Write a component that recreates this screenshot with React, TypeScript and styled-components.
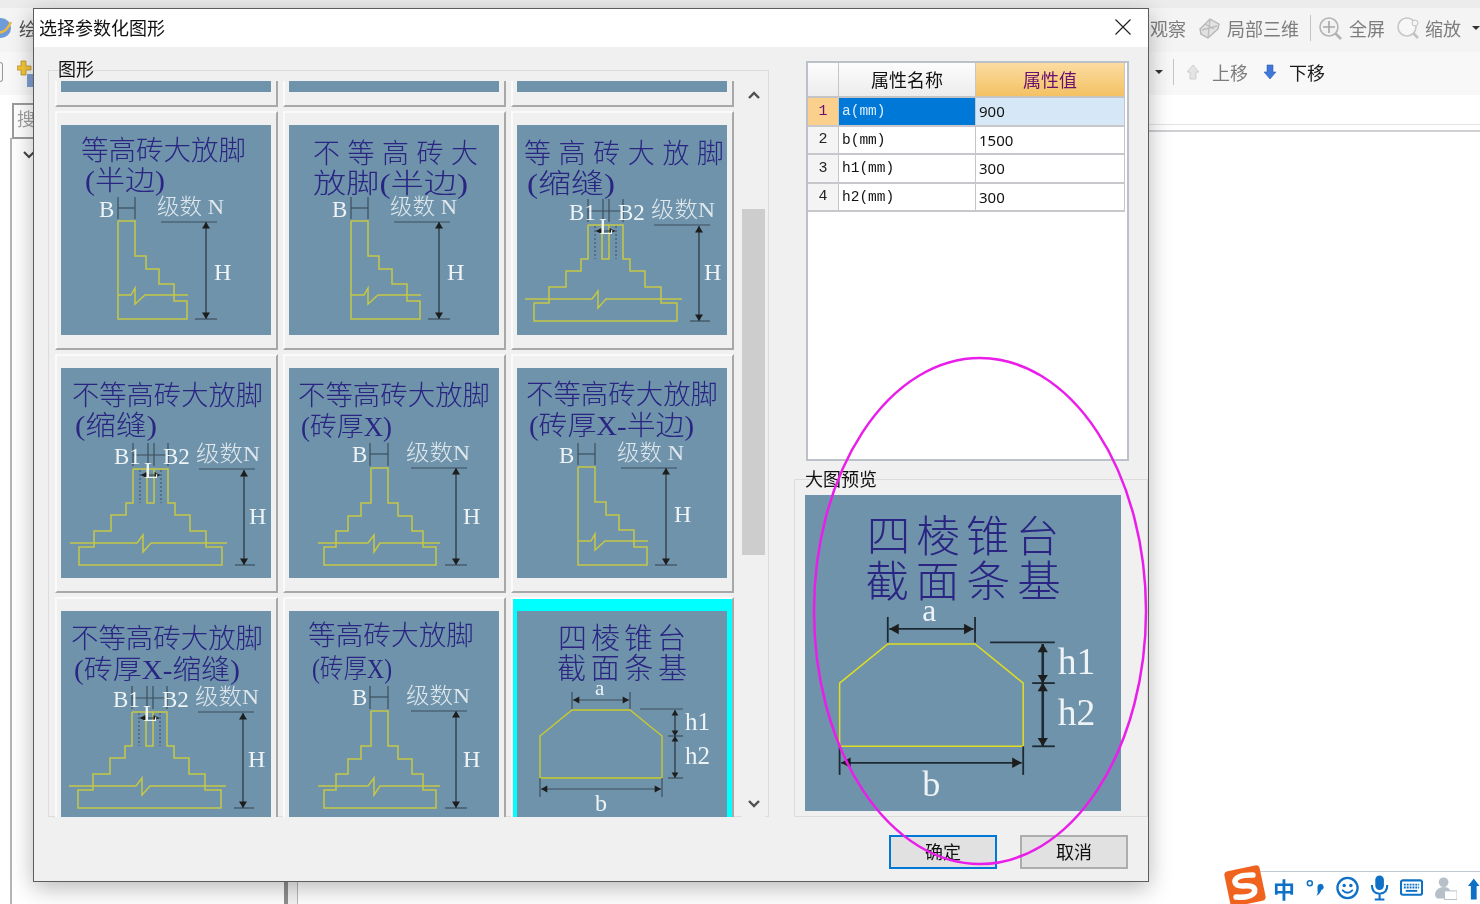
import React from "react";
import styled, { createGlobalStyle } from "styled-components";

const GlobalStyle = createGlobalStyle`
  html, body { margin: 0; padding: 0; background: #fff; overflow: hidden; }
  * { box-sizing: border-box; }
`;

const CJK = `"Noto Sans CJK SC", "Liberation Sans", sans-serif`;

const Page = styled.div`
  position: relative;
  width: 1480px;
  height: 904px;
  overflow: hidden;
  background: #fff;
  font-family: ${CJK};
  display: flex;
  flex-direction: column;
  filter: blur(0.35px);
`;

/* ---------- application behind the dialog ---------- */
const TopStrip = styled.div`
  height: 8px;
  background: #ececec;
`;
const ToolRow = styled.div<{ $h: number; $bg: string }>`
  height: ${(p) => p.$h}px;
  background: ${(p) => p.$bg};
  display: flex;
  align-items: center;
  justify-content: space-between;
  color: #7d7d7d;
  font-size: 18px;
  padding-bottom: 4px;
`;
const ToolGroup = styled.div<{ $gap?: number; $pr?: number }>`
  display: flex;
  align-items: center;
  gap: ${(p) => p.$gap ?? 11}px;
  padding-right: ${(p) => p.$pr ?? 0}px;
`;
const ToolItem = styled.div<{ $gap?: number }>`
  display: flex;
  align-items: center;
  gap: ${(p) => p.$gap ?? 5}px;
`;
const ToolText = styled.span<{ $dark?: boolean; $mr?: number }>`
  color: ${(p) => (p.$dark ? "#1a1a1a" : "#7d7d7d")};
  white-space: nowrap;
  margin-right: ${(p) => p.$mr ?? 0}px;
`;
const ToolSep = styled.div<{ $mr?: number }>`
  width: 1px;
  height: 26px;
  background: #c4c4c4;
  margin-right: ${(p) => p.$mr ?? -4}px;
`;
const Caret = styled.div<{ $mr?: number }>`
  width: 0;
  height: 0;
  border-left: 4px solid transparent;
  border-right: 4px solid transparent;
  border-top: 4px solid #333;
  margin-right: ${(p) => p.$mr ?? 0}px;
`;
const AppLeft = styled.div`
  display: flex;
  align-items: center;
  gap: 7px;
`;
const AppGlyph = styled.span`
  color: #555;
  font-size: 18px;
`;
const MiniInput = styled.div`
  width: 3px;
  height: 20px;
  border: 1px solid #999;
  border-left: 0;
  border-radius: 0 3px 3px 0;
  margin-right: 7px;
`;
const Workspace = styled.div`
  flex: 1;
  display: flex;
`;
const LeftPane = styled.div`
  width: 284px;
  padding-left: 10px;
  display: flex;
  flex-direction: column;
`;
const LeftPaneInner = styled.div`
  flex: 1;
  border-left: 2px solid #b4b4b4;
  margin-top: 43px;
  background: #fff;
  padding: 3px 0 0 10px;
  color: #444;
`;
const SearchBox = styled.div`
  width: 120px;
  height: 36px;
  margin: 8px 0 0 2px;
  border: 2px solid #9c9c9c;
  color: #a0a0a0;
  font-size: 18px;
  line-height: 26px;
  padding-left: 3px;
  position: absolute;
  top: 95px;
  left: 10px;
`;
const Splitter = styled.div`
  width: 14px;
  border-left: 4px solid #8f8f8f;
  border-right: 1px solid #b9b9b9;
  background: #f3f3f3;
`;
const ContentPane = styled.div`
  flex: 1;
  display: flex;
  flex-direction: column;
`;
const ContentHead = styled.div`
  height: 37px;
  border-bottom: 2px solid #cfcfd4;
  box-shadow: inset 0 -5px 0 #fff, inset 0 -6px 0 #e3e3e3;
`;

/* ---------- dialog ---------- */
const Dialog = styled.div`
  position: absolute;
  left: 33px;
  top: 8px;
  width: 1116px;
  height: 874px;
  border: 1px solid #5c5c5c;
  background: #f0f0f0;
  display: flex;
  flex-direction: column;
  box-shadow: 0 6px 22px rgba(0, 0, 0, 0.28);
`;
const TitleBar = styled.div`
  height: 38px;
  background: #fff;
  display: flex;
  align-items: center;
  justify-content: space-between;
  padding: 0 17px 3px 5px;
  font-size: 18px;
  color: #111;
`;
const DialogBody = styled.div`
  flex: 1;
  display: flex;
  flex-direction: column;
  padding: 14px 0 0 14px;
`;
const Columns = styled.div`
  display: flex;
  gap: 25px;
`;
const GroupBox = styled.div`
  position: relative;
  border: 1px solid #dcdcdc;
`;
const GroupLabel = styled.span<{ $top: number; $left: number }>`
  position: absolute;
  top: ${(p) => p.$top}px;
  left: ${(p) => p.$left}px;
  font-size: 18px;
  line-height: 21px;
  color: #111;
`;
const ShapesGroup = styled(GroupBox)`
  width: 721px;
  height: 747px;
  margin-top: 9px;
  padding: 10px 3px 0 0;
  display: flex;
  gap: 7px;
`;
const Viewport = styled.div`
  width: 686px;
  height: 736px;
  overflow: hidden;
`;
const ShapeGrid = styled.div`
  display: grid;
  grid-template-columns: repeat(3, 223px);
  grid-auto-rows: 239px;
  column-gap: 5px;
  row-gap: 4px;
  padding-left: 6px;
  margin-top: -213px;
`;
const ShapeCard = styled.div<{ $selected?: boolean }>`
  padding: 12px 0 0 4px;
  border-style: solid;
  border-width: 2px;
  border-color: #fafafa #a8a8a8 #a8a8a8 #fafafa;
  background: ${(p) => (p.$selected ? "#00ffff" : "#f0f0f0")};
`;
const ScrollBar = styled.div`
  width: 23px;
  height: 736px;
  background: #f0f0f0;
  display: flex;
  flex-direction: column;
  align-items: center;
  justify-content: space-between;
  padding: 9px 0 8px;
  position: relative;
`;
const ScrollThumb = styled.div`
  position: absolute;
  left: 0;
  top: 128px;
  width: 23px;
  height: 346px;
  background: #cdcdcd;
`;
const ChevronSvg = styled.svg`
  display: block;
  position: relative;
`;
const RightColumn = styled.div`
  width: 355px;
  display: flex;
  flex-direction: column;
`;
const PropBox = styled.div`
  width: 323px;
  height: 400px;
  margin-left: 12px;
  border: 2px solid #bcc0c8;
  background: #fff;
`;
const PropGrid = styled.div`
  display: grid;
  grid-template-columns: 31px 137px 149px;
  grid-template-rows: 35px repeat(4, 28.5px);
  width: 317px;
`;
const HeadCell = styled.div<{ $active?: boolean }>`
  display: flex;
  align-items: center;
  justify-content: center;
  padding-bottom: 2px;
  font-size: 18px;
  color: ${(p) => (p.$active ? "#6a1070" : "#111")};
  background: ${(p) =>
    p.$active
      ? "linear-gradient(#fbdca2, #f4c163)"
      : "linear-gradient(#fdfdfd, #ececec)"};
  border-right: 1px solid #c6c6c6;
  border-bottom: 2px solid #c4c4c4;
`;
const NumCell = styled.div<{ $active?: boolean }>`
  display: flex;
  align-items: center;
  justify-content: center;
  font-family: "Liberation Mono", monospace;
  font-size: 15px;
  color: ${(p) => (p.$active ? "#6a1070" : "#222")};
  background: ${(p) => (p.$active ? "#fbd08c" : "#f4f4f4")};
  border-right: 1px solid #c6c6c6;
  border-bottom: 2px solid #c8c8cc;
`;
const NameCell = styled.div<{ $active?: boolean }>`
  display: flex;
  align-items: center;
  padding-left: 3px;
  font-family: "Liberation Mono", monospace;
  font-size: 14.5px;
  color: ${(p) => (p.$active ? "#d8ecff" : "#111")};
  background: ${(p) => (p.$active ? "#0078d7" : "#fff")};
  border-right: 1px solid #c6c6c6;
  border-bottom: 2px solid #c8c8cc;
`;
const ValueCell = styled.div<{ $active?: boolean }>`
  display: flex;
  align-items: center;
  padding-left: 3px;
  font-family: "Noto Sans", sans-serif;
  font-size: 15px;
  color: #111;
  background: ${(p) => (p.$active ? "#d6e8f7" : "#fff")};
  border-right: 1px solid #c6c6c6;
  border-bottom: 2px solid #c8c8cc;
`;
const PreviewGroup = styled(GroupBox)`
  height: 338px;
  margin-top: 18px;
  padding: 15px 0 0 10px;
`;
const PreviewImage = styled.div`
  width: 316px;
  height: 316px;
`;
const ThumbSvg = styled.svg<{ $size: number; $ink: string }>`
  display: block;
  width: ${(p) => p.$size}px;
  height: ${(p) => p.$size}px;
  background: #6e93ab;
  color: ${(p) => p.$ink};
`;
const Footer = styled.div`
  display: flex;
  justify-content: flex-end;
  gap: 23px;
  padding: 18px 20px 0 0;
`;
const DialogButton = styled.div<{ $primary?: boolean }>`
  width: 108px;
  height: 34px;
  display: flex;
  align-items: center;
  justify-content: center;
  padding-bottom: 3px;
  font-size: 18px;
  color: #111;
  background: #e1e1e1;
  border: 2px solid ${(p) => (p.$primary ? "#0078d7" : "#adadad")};
`;
const Annotation = styled.svg`
  position: absolute;
  left: 810px;
  top: 355px;
  width: 340px;
  height: 512px;
  pointer-events: none;
`;

/* ---------- drawing text ---------- */
const TitleText = styled.text`
  fill: #2a2583;
  font-family: "Liberation Serif", "Noto Sans CJK SC", serif;
  font-weight: 300;
`;
const DimText = styled.text<{ $size?: number }>`
  fill: #eef3f6;
  font-family: "Liberation Serif", "Noto Sans CJK SC", serif;
  font-size: ${(p) => p.$size ?? 22}px;
`;
const StepText = styled.text`
  fill: #dfe7ec;
  font-family: "Liberation Serif", "Noto Sans CJK SC", serif;
  font-size: 22px;
  font-weight: 300;
`;

/* ---------- sogou bar ---------- */
const ImeBar = styled.div`
  position: absolute;
  right: 0;
  bottom: 0;
  width: 222px;
  height: 33px;
  background: #fff;
  border-top: 1px solid #c3cad6;
  display: flex;
  align-items: center;
  padding: 0 0 0 15px;
  gap: 11px;
  color: #0f71c6;
`;
const ImeZh = styled.span`
  font-size: 22px;
  font-weight: 700;
  line-height: 1;
  width: 22px;
`;
const ImeLogo = styled.svg`
  position: absolute;
  left: 1222px;
  top: 864px;
  width: 46px;
  height: 44px;
`;

/* ---------- shape diagrams ---------- */
const Y = "#c6c745";

function VDim({ x, y1, y2, size = 4 }: { x: number; y1: number; y2: number; size?: number }) {
  return (
    <g>
      <line x1={x} x2={x} y1={y1} y2={y2} stroke="currentColor" strokeWidth={1.7} />
      <polygon points={`${x},${y1} ${x - size},${y1 + size * 1.6} ${x + size},${y1 + size * 1.6}`} fill="#1d1d1d" />
      <polygon points={`${x},${y2} ${x - size},${y2 - size * 1.6} ${x + size},${y2 - size * 1.6}`} fill="#1d1d1d" />
    </g>
  );
}
function HDim({ y, x1, x2, size = 3.5 }: { y: number; x1: number; x2: number; size?: number }) {
  return (
    <g>
      <line x1={x1} x2={x2} y1={y} y2={y} stroke="currentColor" strokeWidth={1.2} />
      <polygon points={`${x1},${y} ${x1 + size * 1.8},${y - size} ${x1 + size * 1.8},${y + size}`} fill="#1d1d1d" />
      <polygon points={`${x2},${y} ${x2 - size * 1.8},${y - size} ${x2 - size * 1.8},${y + size}`} fill="#1d1d1d" />
    </g>
  );
}
const Tick = ({ x1, y1, x2, y2 }: { x1: number; y1: number; x2: number; y2: number }) => (
  <line x1={x1} y1={y1} x2={x2} y2={y2} stroke="currentColor" strokeWidth={1.2} />
);

function DiagramA({ dx, dy, hy }: { dx: number; dy: number; hy: number }) {
  return (
    <g transform={`translate(${dx} ${dy})`}>
      <Tick x1={57} y1={72} x2={57} y2={94} />
      <Tick x1={74} y1={72} x2={74} y2={94} />
      <Tick x1={57} y1={83} x2={74} y2={83} />
      <DimText x={38} y={92} $size={23}>B</DimText>
      <StepText x={96} y={89} textLength={67} lengthAdjust="spacingAndGlyphs">级数 N</StepText>
      <polyline fill="none" stroke={Y} strokeWidth={1.5}
        points="57,96 74,96 74,131 85,131 85,144 98,144 98,159 113,159 113,176 126,176 126,194 57,194 57,96" />
      <polyline fill="none" stroke={Y} strokeWidth={1.5}
        points="57,170 70,170 74,163 74,179 84,170 127,170" />
      <Tick x1={100} y1={97} x2={156} y2={97} />
      <Tick x1={134} y1={194} x2={156} y2={194} />
      <VDim x={145} y1={97} y2={194} />
      <DimText x={153} y={155 + hy} $size={24}>H</DimText>
    </g>
  );
}
function DiagramB({ dx, dy }: { dx: number; dy: number }) {
  return (
    <g transform={`translate(${dx} ${dy})`}>
      <Tick x1={81} y1={75} x2={81} y2={98} />
      <Tick x1={99} y1={75} x2={99} y2={98} />
      <Tick x1={81} y1={86} x2={99} y2={86} />
      <DimText x={63} y={94} $size={23}>B</DimText>
      <StepText x={117} y={92} textLength={64} lengthAdjust="spacingAndGlyphs">级数N</StepText>
      <polyline fill="none" stroke={Y} strokeWidth={1.5}
        points="82,100 82,135 72,135 72,148 59,148 59,163 47,163 47,179 35,179 35,197 147,197 147,179 134,179 134,163 123,163 123,148 109,148 109,135 99,135 99,100 82,100" />
      <polyline fill="none" stroke={Y} strokeWidth={1.5}
        points="29,175 79,175 85,167 85,184 91,175 151,175" />
      <Tick x1={122} y1={100} x2={178} y2={100} />
      <Tick x1={156} y1={197} x2={178} y2={197} />
      <VDim x={167} y1={100} y2={197} />
      <DimText x={174} y={156} $size={24}>H</DimText>
    </g>
  );
}
function DiagramC({ dx, dy }: { dx: number; dy: number }) {
  return (
    <g transform={`translate(${dx} ${dy})`}>
      <Tick x1={72} y1={75} x2={72} y2={98} />
      <Tick x1={87} y1={75} x2={87} y2={98} />
      <Tick x1={93} y1={75} x2={93} y2={98} />
      <Tick x1={107} y1={75} x2={107} y2={98} />
      <Tick x1={72} y1={87} x2={107} y2={87} />
      <polyline fill="none" stroke={Y} strokeWidth={1.5}
        points="72,101 72,135 65,135 65,147 50,147 50,163 33,163 33,179 18,179 18,197 161,197 161,179 145,179 145,163 129,163 129,147 114,147 114,135 107,135 107,101 72,101" />
      <polyline fill="none" stroke={Y} strokeWidth={1.5} points="86,101 86,135 93,135 93,101" />
      <line x1={79} x2={79} y1={102} y2={135} stroke="currentColor" strokeDasharray="2 2" />
      <line x1={100} x2={100} y1={102} y2={135} stroke="currentColor" strokeDasharray="2 2" />
      <polyline fill="none" stroke={Y} strokeWidth={1.5}
        points="9,175 76,175 82,167 82,184 90,175 166,175" />
      <HDim y={107} x1={80} x2={99} size={3} />
      <DimText x={53} y={96} $size={23}>B1</DimText>
      <DimText x={102} y={96} $size={23}>B2</DimText>
      <DimText x={83} y={110} $size={24}>L</DimText>
      <StepText x={135} y={93} textLength={64} lengthAdjust="spacingAndGlyphs">级数N</StepText>
      <Tick x1={138} y1={101} x2={194} y2={101} />
      <Tick x1={174} y1={197} x2={194} y2={197} />
      <VDim x={183} y1={102} y2={197} />
      <DimText x={188} y={156} $size={24}>H</DimText>
    </g>
  );
}
function DiagramD({ heavy }: { heavy?: boolean }) {
  return (
    <g>
      <TitleText x={41} y={38} fontSize={29} textLength={128} lengthAdjust="spacing">四棱锥台</TitleText>
      <TitleText x={40} y={68} fontSize={29} textLength={130} lengthAdjust="spacing">截面条基</TitleText>
      <DimText x={78} y={84} $size={21}>a</DimText>
      <Tick x1={55} y1={81} x2={55} y2={98} />
      <Tick x1={113} y1={81} x2={113} y2={98} />
      <HDim y={89} x1={56} x2={112} />
      <polygon points="55,99 113,99 145,125 145,167 23,167 23,125" fill="none"
        stroke={heavy ? "#e2de1e" : "#cdcb2b"} strokeWidth={heavy ? 1 : 1.3} />
      <Tick x1={123} y1={98} x2={166} y2={98} />
      <Tick x1={151} y1={125} x2={166} y2={125} />
      <Tick x1={151} y1={167} x2={166} y2={167} />
      <VDim x={158} y1={99} y2={125} size={3.4} />
      <VDim x={158} y1={125} y2={167} size={3.4} />
      <DimText x={168} y={119} $size={25}>h1</DimText>
      <DimText x={168} y={153} $size={25}>h2</DimText>
      <Tick x1={23} y1={167} x2={23} y2={186} />
      <Tick x1={145} y1={167} x2={145} y2={186} />
      <HDim y={178} x1={24} x2={144} />
      <DimText x={78} y={200} $size={24}>b</DimText>
    </g>
  );
}

type TitleLine = { t: string; x: number; y: number; w: number; spaced?: boolean };
type Shape = { titles: TitleLine[]; kind: "A" | "B" | "C" | "D" | "none"; dx?: number; dy?: number; hy?: number; selected?: boolean };

const S7 = "不等高砖大放脚";
const S6 = "等高砖大放脚";
const shapes: Shape[] = [
  { titles: [], kind: "none" },
  { titles: [], kind: "none" },
  { titles: [], kind: "none" },
  { kind: "A", dx: 0, dy: 0, titles: [{ t: S6, x: 20, y: 35, w: 165 }, { t: "(半边)", x: 24, y: 65, w: 80 }] },
  { kind: "A", dx: 5, dy: 0, titles: [{ t: "不等高砖大", x: 24, y: 38, w: 165, spaced: true }, { t: "放脚(半边)", x: 24, y: 68, w: 155 }] },
  { kind: "C", dx: -1, dy: -1, titles: [{ t: S6, x: 7, y: 38, w: 200, spaced: true }, { t: "(缩缝)", x: 10, y: 68, w: 88 }] },
  { kind: "C", dx: 0, dy: 0, titles: [{ t: S7, x: 11, y: 37, w: 191 }, { t: "(缩缝)", x: 14, y: 67, w: 82 }] },
  { kind: "B", dx: 0, dy: 0, titles: [{ t: S7, x: 9, y: 37, w: 192 }, { t: "(砖厚X)", x: 12, y: 68, w: 91 }] },
  { kind: "A", dx: 4, dy: 3, hy: -4, titles: [{ t: S7, x: 9, y: 36, w: 192 }, { t: "(砖厚X-半边)", x: 12, y: 67, w: 165 }] },
  { kind: "C", dx: -1, dy: 0, titles: [{ t: S7, x: 10, y: 37, w: 192 }, { t: "(砖厚X-缩缝)", x: 13, y: 68, w: 166 }] },
  { kind: "B", dx: 0, dy: 0, titles: [{ t: S6, x: 19, y: 34, w: 166 }, { t: "(砖厚X)", x: 23, y: 67, w: 80 }] },
  { kind: "D", selected: true, titles: [] },
];

function Thumb({ shape }: { shape: Shape }) {
  const dx = shape.dx ?? 0;
  const dy = shape.dy ?? 0;
  return (
    <ThumbSvg $size={210} $ink="#3d4f5c" viewBox="0 0 210 210">
      {shape.titles.map((l) => (
        <TitleText key={l.t} x={l.x} y={l.y} fontSize={27} textLength={l.w}
          lengthAdjust={l.spaced ? "spacing" : "spacingAndGlyphs"}>
          {l.t}
        </TitleText>
      ))}
      {shape.kind === "A" && <DiagramA dx={dx} dy={dy} hy={shape.hy ?? 0} />}
      {shape.kind === "B" && <DiagramB dx={dx} dy={dy} />}
      {shape.kind === "C" && <DiagramC dx={dx} dy={dy} />}
      {shape.kind === "D" && <DiagramD />}
    </ThumbSvg>
  );
}

const Chevron = ({ up }: { up?: boolean }) => (
  <ChevronSvg width="14" height="10" viewBox="0 0 14 10">
    <polyline points={up ? "2,8 7,3 12,8" : "2,2 7,7 12,2"} fill="none" stroke="#505050" strokeWidth="2.4" />
  </ChevronSvg>
);

const rows = [
  ["1", "a(mm)", "900"],
  ["2", "b(mm)", "1500"],
  ["3", "h1(mm)", "300"],
  ["4", "h2(mm)", "300"],
];

export default function App() {
  return (
    <Page>
      <GlobalStyle />
      <TopStrip />
      <ToolRow $h={44} $bg="#f4f4f4">
        <AppLeft>
          <svg width="12" height="24" viewBox="0 0 12 24">
            <circle cx="1" cy="12" r="10" fill="#6f9bd8" />
            <path d="M-4 15 Q4 20 11 6" stroke="#f0b93a" strokeWidth="2.4" fill="none" />
          </svg>
          <AppGlyph>绘</AppGlyph>
        </AppLeft>
        <ToolGroup>
          <ToolText>观察</ToolText>
          <ToolItem>
            <svg width="25" height="24" viewBox="0 0 25 24">
              <path d="M3 13 L13 3 L22 8 L21 13 L11 22 L4 18 Z" fill="#e2e2e2" stroke="#b5b5b5" strokeWidth="1.4" />
              <path d="M8 8 L17 13 M13 3 L11 22 M5 14 L20 10" stroke="#bdbdbd" strokeWidth="1.4" fill="none" />
            </svg>
            <ToolText>局部三维</ToolText>
          </ToolItem>
          <ToolSep />
          <ToolItem $gap={7}>
            <svg width="24" height="24" viewBox="0 0 24 24">
              <circle cx="11" cy="11" r="9" fill="#f2f2f2" stroke="#b3b3b3" strokeWidth="1.6" />
              <path d="M11 5 V17 M5 11 H17" stroke="#a6a6a6" strokeWidth="1.6" />
              <path d="M17 17 L23 23" stroke="#b3b3b3" strokeWidth="2.6" />
            </svg>
            <ToolText>全屏</ToolText>
          </ToolItem>
          <ToolItem>
            <svg width="24" height="24" viewBox="0 0 24 24">
              <circle cx="11" cy="11" r="9" fill="#f7f7f7" stroke="#c6c6c6" strokeWidth="1.6" />
              <circle cx="19" cy="7" r="3" fill="#f4f4f4" stroke="#c2c2c2" />
              <path d="M17 17 L22 22" stroke="#c2c2c2" strokeWidth="2.6" />
            </svg>
            <ToolText>缩放</ToolText>
          </ToolItem>
          <Caret />
        </ToolGroup>
      </ToolRow>
      <ToolRow $h={43} $bg="#f8f8f8">
        <AppLeft>
          <MiniInput />
          <svg width="18" height="30" viewBox="0 0 18 30">
            <path d="M4 4 H9 V9 H14 V13 H9 V18 H4 V13 H0 V9 H4 Z" fill="#f2c53a" stroke="#b9912b" strokeWidth="0.8" />
            <rect x="10" y="17" width="8" height="13" fill="#7f9fd2" />
          </svg>
        </AppLeft>
        <ToolGroup $gap={12} $pr={155}>
          <Caret $mr={-2} />
          <ToolSep $mr={0} />
          <svg width="14" height="16" viewBox="0 0 14 16">
            <path d="M7 1 L13 8 H10 V15 H4 V8 H1 Z" fill="#e4e4e4" stroke="#cfcfcf" />
          </svg>
          <ToolText $mr={3}>上移</ToolText>
          <svg width="14" height="16" viewBox="0 0 14 16">
            <path d="M4 1 H10 V8 H13 L7 15 L1 8 H4 Z" fill="#3f78d8" stroke="#2f5fb6" strokeWidth="0.6" />
          </svg>
          <ToolText $dark>下移</ToolText>
        </ToolGroup>
      </ToolRow>
      <Workspace>
        <LeftPane>
          <SearchBox>搜</SearchBox>
          <LeftPaneInner>
            <svg width="14" height="10" viewBox="0 0 14 10">
              <polyline points="2,2 7,7 12,2" fill="none" stroke="#444" strokeWidth="2" />
            </svg>
          </LeftPaneInner>
        </LeftPane>
        <Splitter />
        <ContentPane>
          <ContentHead />
        </ContentPane>
      </Workspace>

      <Dialog>
        <TitleBar>
          <span>选择参数化图形</span>
          <svg width="16" height="16" viewBox="0 0 16 16">
            <path d="M0.5 0.5 L15.5 15.5 M15.5 0.5 L0.5 15.5" stroke="#222" strokeWidth="1.2" />
          </svg>
        </TitleBar>
        <DialogBody>
          <Columns>
            <ShapesGroup>
              <GroupLabel $top={-13} $left={9}>图形</GroupLabel>
              <Viewport>
                <ShapeGrid>
                  {shapes.map((s, i) => (
                    <ShapeCard key={i} $selected={s.selected}>
                      <Thumb shape={s} />
                    </ShapeCard>
                  ))}
                </ShapeGrid>
              </Viewport>
              <ScrollBar>
                <ScrollThumb />
                <Chevron up />
                <Chevron />
              </ScrollBar>
            </ShapesGroup>
            <RightColumn>
              <PropBox>
                <PropGrid>
                  <HeadCell />
                  <HeadCell>属性名称</HeadCell>
                  <HeadCell $active>属性值</HeadCell>
                  {rows.map((r, i) => (
                    <React.Fragment key={r[0]}>
                      <NumCell $active={i === 0}>{r[0]}</NumCell>
                      <NameCell $active={i === 0}>{r[1]}</NameCell>
                      <ValueCell $active={i === 0}>{r[2]}</ValueCell>
                    </React.Fragment>
                  ))}
                </PropGrid>
              </PropBox>
              <PreviewGroup>
                <GroupLabel $top={-12} $left={10}>大图预览</GroupLabel>
                <PreviewImage>
                  <ThumbSvg $size={316} $ink="#1e2a33" viewBox="0 0 210 210">
                    <DiagramD heavy />
                  </ThumbSvg>
                </PreviewImage>
              </PreviewGroup>
            </RightColumn>
          </Columns>
          <Footer>
            <DialogButton $primary>确定</DialogButton>
            <DialogButton>取消</DialogButton>
          </Footer>
        </DialogBody>
      </Dialog>

      <ImeBar>
        <ImeZh>中</ImeZh>
        <svg width="20" height="24" viewBox="0 0 20 24">
          <circle cx="4" cy="7" r="2.6" fill="none" stroke="#0f71c6" strokeWidth="1.6" />
          <path d="M12 11 a3.2 3.2 0 1 1 4 3 q-1 4 -5 6 q2 -3 1 -6 z" fill="#0f71c6" />
        </svg>
        <svg width="24" height="24" viewBox="0 0 24 24">
          <circle cx="12" cy="12" r="10.5" fill="none" stroke="#0f71c6" strokeWidth="2.4" />
          <circle cx="8.5" cy="9.5" r="1.8" fill="#0f71c6" />
          <circle cx="15.5" cy="9.5" r="1.8" fill="#0f71c6" />
          <path d="M6.5 14 Q12 20 17.5 14" fill="none" stroke="#0f71c6" strokeWidth="2" />
        </svg>
        <svg width="20" height="28" viewBox="0 0 20 28">
          <rect x="5.5" y="1" width="9" height="15" rx="4.5" fill="#0f71c6" />
          <path d="M2 11 Q2 20 10 20 Q18 20 18 11 M10 20 V25 M5 26 H15" fill="none" stroke="#0f71c6" strokeWidth="2.2" />
        </svg>
        <svg width="24" height="20" viewBox="0 0 24 20">
          <rect x="1" y="2" width="22" height="15" rx="2" fill="#fff" stroke="#0f71c6" strokeWidth="2.2" />
          <path d="M4 6.5 H20 M4 9.5 H20" stroke="#0f71c6" strokeWidth="2" strokeDasharray="2 1" />
          <path d="M6 13 H18" stroke="#0f71c6" strokeWidth="2" />
        </svg>
        <svg width="24" height="26" viewBox="0 0 24 26">
          <circle cx="10" cy="7" r="5" fill="#b7bfc8" />
          <path d="M1 19 Q3 12 10 12 Q16 12 17 16 V24 H4 Q1 23 1 19 Z" fill="#b7bfc8" />
          <rect x="11" y="16" width="13" height="9" fill="#fff" stroke="#b7bfc8" />
        </svg>
        <svg width="12" height="24" viewBox="0 0 12 24">
          <path d="M6 2 L12 10 H9 V24 H3 V10 H0 Z" fill="#0f71c6" />
        </svg>
      </ImeBar>
      <ImeLogo viewBox="0 0 46 44">
        <g transform="rotate(-12 23 22)">
          <rect x="5" y="4" width="36" height="36" rx="4" fill="#f0631f" />
          <path d="M33 13 Q15 9 14 16 Q14 21 24 22 Q34 24 31 30 Q27 35 12 31" fill="none" stroke="#fff" strokeWidth="5.5" strokeLinecap="round" />
        </g>
      </ImeLogo>

      <Annotation viewBox="0 0 340 512">
        <ellipse cx="170" cy="256" rx="166" ry="253" fill="none" stroke="#ea1eea" strokeWidth="2.5" />
      </Annotation>
    </Page>
  );
}
